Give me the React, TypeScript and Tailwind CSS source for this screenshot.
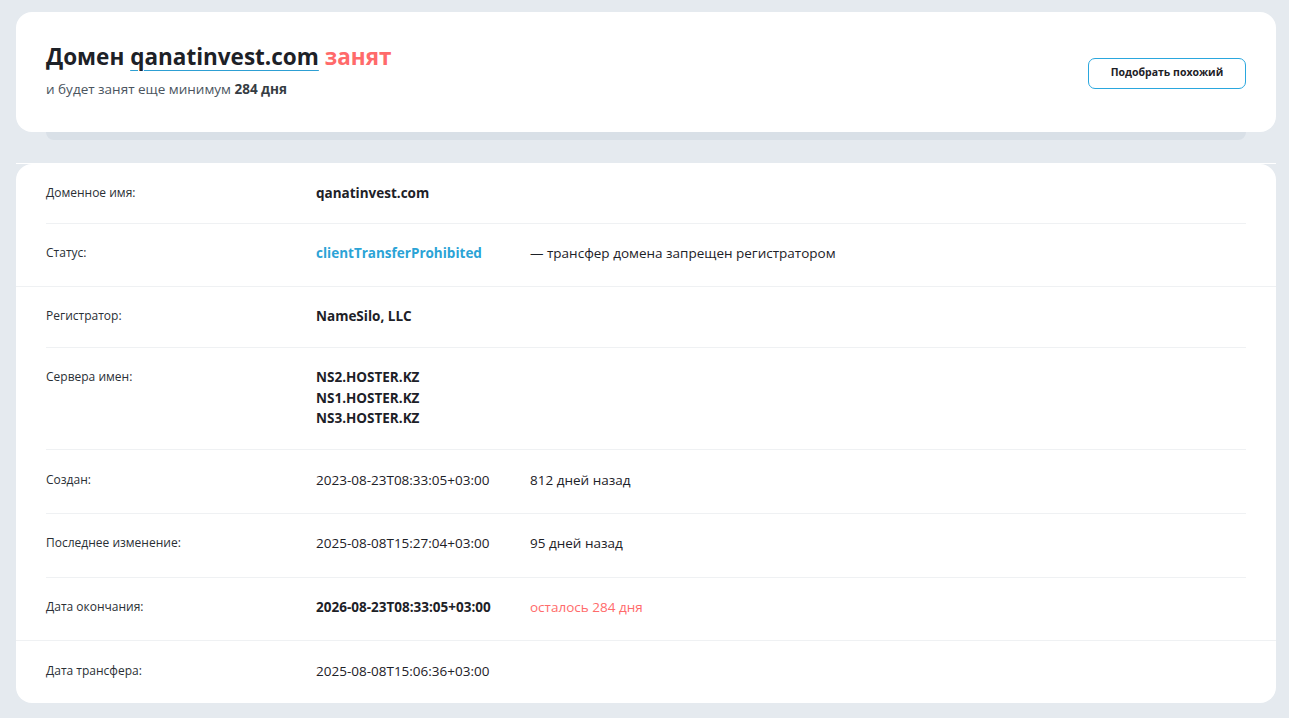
import React from "react";

type Row = {
  label: string;
  values: React.ReactNode;
  extra?: React.ReactNode;
  full?: boolean;
  pt?: string;
};

const rows: Row[] = [
  {
    label: "Доменное имя:",
    values: <span className="font-bold text-[#1d2127]">qanatinvest.com</span>,
    pt: "pt-[19px] pb-[20px]",
  },
  {
    label: "Статус:",
    values: <span className="font-bold text-[#2ba3d6]">clientTransferProhibited</span>,
    extra: <span className="text-[#1d2127]">— трансфер домена запрещен регистратором</span>,
    full: true,
    pt: "pt-[19px] pb-[23px]",
  },
  {
    label: "Регистратор:",
    values: <span className="font-bold text-[#1d2127]">NameSilo, LLC</span>,
    pt: "pt-[19px] pb-[21px]",
  },
  {
    label: "Сервера имен:",
    values: (
      <div className="flex flex-col font-bold text-[#1d2127] leading-[20.5px]">
        <span>NS2.HOSTER.KZ</span>
        <span>NS1.HOSTER.KZ</span>
        <span>NS3.HOSTER.KZ</span>
      </div>
    ),
    pt: "pt-[19px] pb-[20px]",
  },
  {
    label: "Создан:",
    values: <span className="text-[#1d2127]">2023-08-23T08:33:05+03:00</span>,
    extra: <span className="text-[#1d2127]">812 дней назад</span>,
    pt: "pt-[20px] pb-[23px]",
  },
  {
    label: "Последнее изменение:",
    values: <span className="text-[#1d2127]">2025-08-08T15:27:04+03:00</span>,
    extra: <span className="text-[#1d2127]">95 дней назад</span>,
    pt: "pt-[19px] pb-[24px]",
  },
  {
    label: "Дата окончания:",
    values: <span className="font-bold text-[#1d2127]">2026-08-23T08:33:05+03:00</span>,
    extra: <span className="text-[#ff6b6b]">осталось 284 дня</span>,
    full: true,
    pt: "pt-[19px] pb-[23px]",
  },
  {
    label: "Дата трансфера:",
    values: <span className="text-[#1d2127]">2025-08-08T15:06:36+03:00</span>,
    pt: "pt-[20px] pb-[22px]",
  },
];

export default function App() {
  return (
    <div
      className="min-h-[718px] w-[1289px] bg-[#e5eaef] pt-[12px] pb-[16px]"
      style={{ fontFamily: '"Open Sans", "Noto Sans", sans-serif' }}
    >
      <div className="ml-[16px] w-[1260px]">
        <div className="flex h-[120px] items-center justify-between rounded-[16px] bg-white pl-[30px] pr-[30px]">
          <div className="flex flex-col">
            <h1 className="text-[22.5px] font-bold leading-[32px] text-[#1d2127] -mt-[6px]">
              Домен{" "}
              <span className="underline decoration-[#2d9fd3] decoration-1 underline-offset-[5px]">
                qanatinvest.com
              </span>{" "}
              <span className="text-[#ff6a6a]">занят</span>
            </h1>
            <p className="mt-[7px] text-[13.5px] leading-[18px] text-[#4a545e]">
              и будет занят еще минимум <span className="font-bold text-[#353c43]">284 дня</span>
            </p>
          </div>
          <button className="mt-[2px] flex h-[31px] w-[158px] items-center justify-center rounded-[7px] border border-[#2aa7de] bg-white text-[10.5px] font-bold text-[#1d2127]">
            Подобрать похожий
          </button>
        </div>
        <div className="mx-[30px] h-[8px] rounded-b-[10px] bg-[#d9e0e7]" />
        <div className="mt-[23px] h-px bg-white" />
        <div className="rounded-[16px] bg-white">
          {rows.map((r, i) => (
            <div key={i}>
              <div className={`flex items-start px-[30px] ${r.pt}`}>
                <div className="w-[270px] shrink-0 pt-[1px] text-[12px] leading-[18px] text-[#2a2f35]">
                  {r.label}
                </div>
                <div className="w-[214px] shrink-0 text-[13.5px] leading-[20px]">{r.values}</div>
                {r.extra && <div className="text-[13.5px] leading-[20px]">{r.extra}</div>}
              </div>
              {i < rows.length - 1 &&
                (r.full ? (
                  <div className="h-px bg-[#eff1f3]" />
                ) : (
                  <div className="mx-[30px] h-px bg-[#eff1f3]" />
                ))}
            </div>
          ))}
        </div>
      </div>
    </div>
  );
}
